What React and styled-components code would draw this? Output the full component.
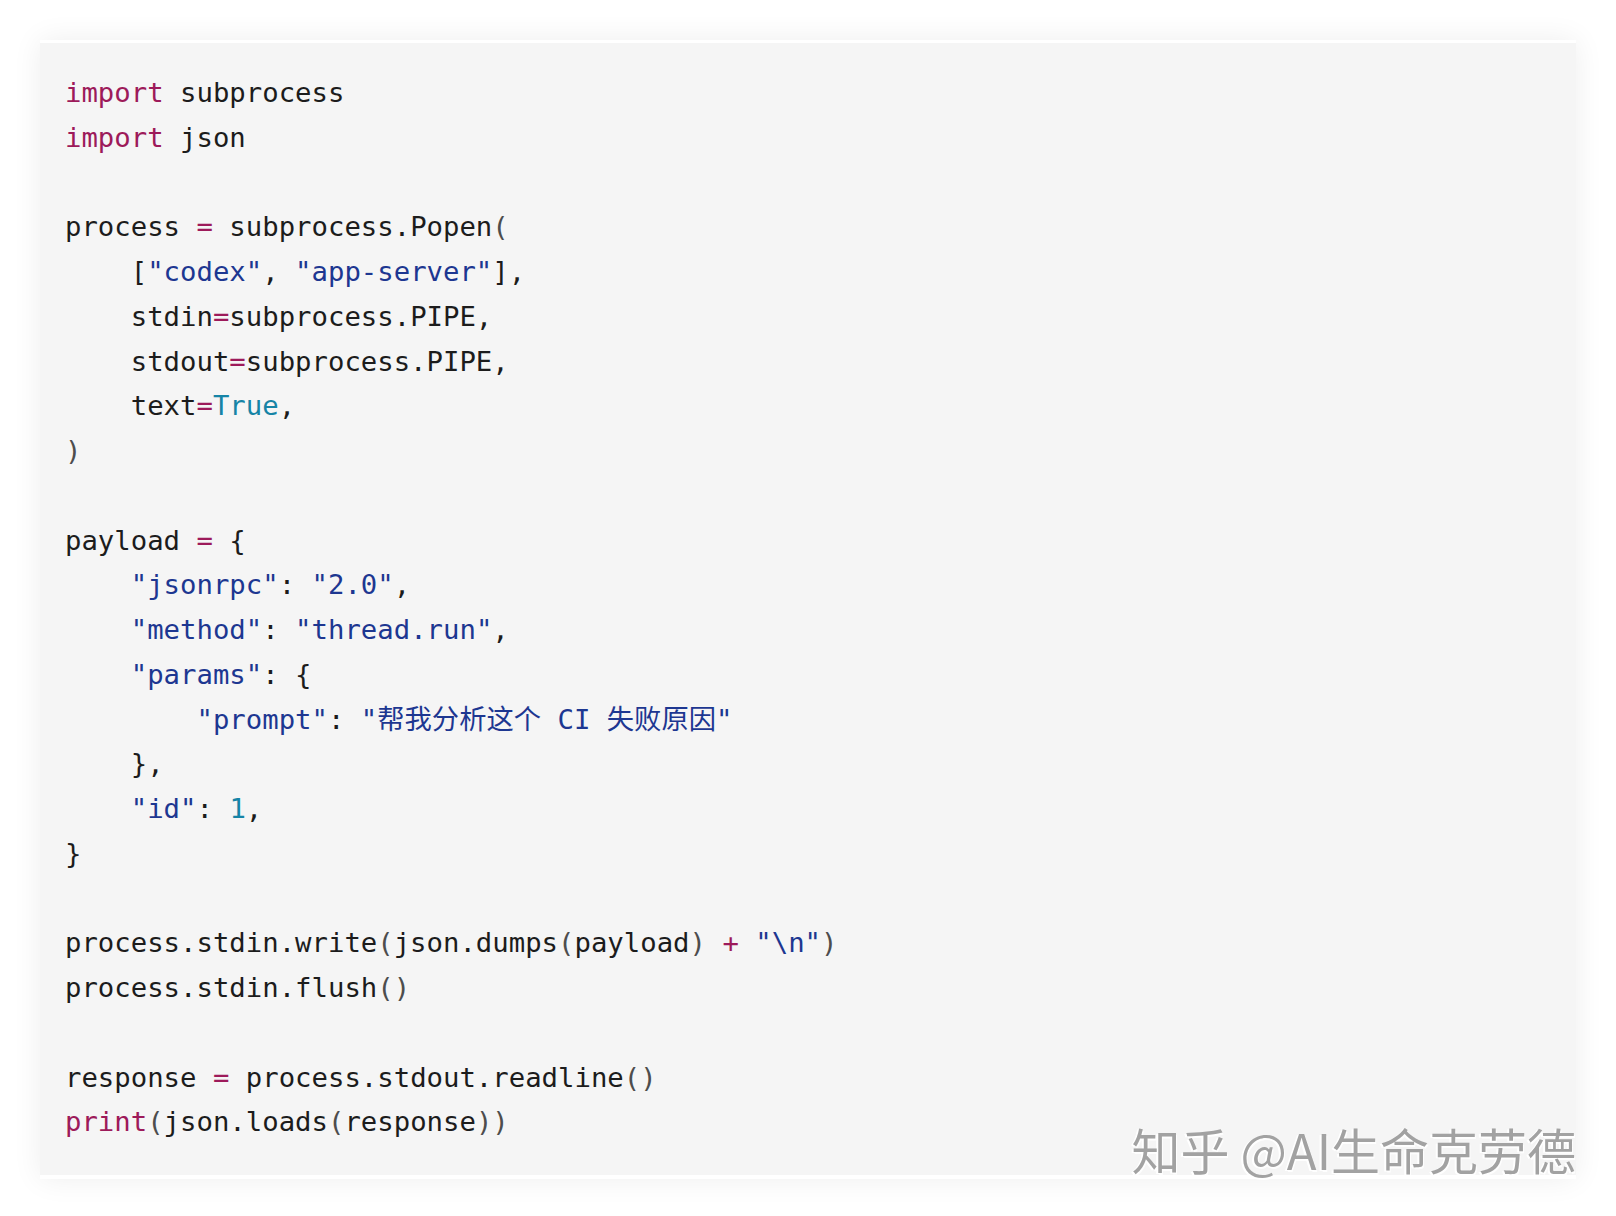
import styled, { createGlobalStyle } from "styled-components"

const GlobalStyle = createGlobalStyle`
  html, body {
    margin: 0;
    padding: 0;
    background: #ffffff;
  }
`

const colors = {
  t: "#1c1c1c",
  kw: "#9d1a5a",
  s: "#1d3791",
  n: "#1684a6",
  p: "#4d4d4d",
}

const Page = styled.div`
  width: 1616px;
  height: 1216px;
  padding: 40px 40px 0 40px;
  box-sizing: border-box;
`

const Card = styled.div`
  position: relative;
  width: 1536px;
  box-sizing: border-box;
  background: #f5f5f5;
  border-top: 3px solid #ffffff;
  border-bottom: 4px solid #ffffff;
  box-shadow: 0 0 28px rgba(0, 0, 0, 0.07);
  padding: 28px 25px 30px 25px;
`

const Code = styled.pre`
  margin: 0;
  font-family: "DejaVu Sans Mono", "Noto Sans CJK SC", monospace;
  font-size: 27.3px;
  line-height: 44.76px;
  color: ${colors.t};
`

const Line = styled.div`
  height: 44.76px;
  white-space: pre;
`

const Tok = styled.span`
  color: ${(props) => colors[props.kind]};
`

// zhihu watermark sits over the bottom-right corner of the block
const Watermark = styled.div`
  position: absolute;
  right: 0;
  bottom: 2px;
  font-family: "Noto Sans CJK SC", "Noto Sans", sans-serif;
  font-size: 49px;
  font-weight: 400;
  line-height: 1;
  color: #a2a2a2;
  text-shadow: -2px 1px 0 #ffffff, 1px 2px 0 rgba(255, 255, 255, 0.9);
  white-space: nowrap;
`

const code = [
  [["kw", "import"], ["t", " subprocess"]],
  [["kw", "import"], ["t", " json"]],
  [],
  [["t", "process "], ["kw", "="], ["t", " subprocess.Popen"], ["p", "("]],
  [["t", "    ["], ["s", '"codex"'], ["t", ", "], ["s", '"app-server"'], ["t", "],"]],
  [["t", "    stdin"], ["kw", "="], ["t", "subprocess.PIPE,"]],
  [["t", "    stdout"], ["kw", "="], ["t", "subprocess.PIPE,"]],
  [["t", "    text"], ["kw", "="], ["n", "True"], ["t", ","]],
  [["p", ")"]],
  [],
  [["t", "payload "], ["kw", "="], ["t", " {"]],
  [["t", "    "], ["s", '"jsonrpc"'], ["t", ": "], ["s", '"2.0"'], ["t", ","]],
  [["t", "    "], ["s", '"method"'], ["t", ": "], ["s", '"thread.run"'], ["t", ","]],
  [["t", "    "], ["s", '"params"'], ["t", ": {"]],
  [["t", "        "], ["s", '"prompt"'], ["t", ": "], ["s", '"帮我分析这个 CI 失败原因"']],
  [["t", "    },"]],
  [["t", "    "], ["s", '"id"'], ["t", ": "], ["n", "1"], ["t", ","]],
  [["t", "}"]],
  [],
  [
    ["t", "process.stdin.write"],
    ["p", "("],
    ["t", "json.dumps"],
    ["p", "("],
    ["t", "payload"],
    ["p", ")"],
    ["t", " "],
    ["kw", "+"],
    ["t", " "],
    ["s", '"\\n"'],
    ["p", ")"],
  ],
  [["t", "process.stdin.flush"], ["p", "()"]],
  [],
  [["t", "response "], ["kw", "="], ["t", " process.stdout.readline"], ["p", "()"]],
  [["kw", "print"], ["p", "("], ["t", "json.loads"], ["p", "("], ["t", "response"], ["p", "))"]],
]

function App() {
  return (
    <Page>
      <GlobalStyle />
      <Card>
        <Code>
          {code.map((line, i) => (
            <Line key={i}>
              {line.map(([kind, text], j) => (
                <Tok key={j} kind={kind}>
                  {text}
                </Tok>
              ))}
            </Line>
          ))}
        </Code>
        <Watermark>知乎 @AI生命克劳德</Watermark>
      </Card>
    </Page>
  )
}

export default App
